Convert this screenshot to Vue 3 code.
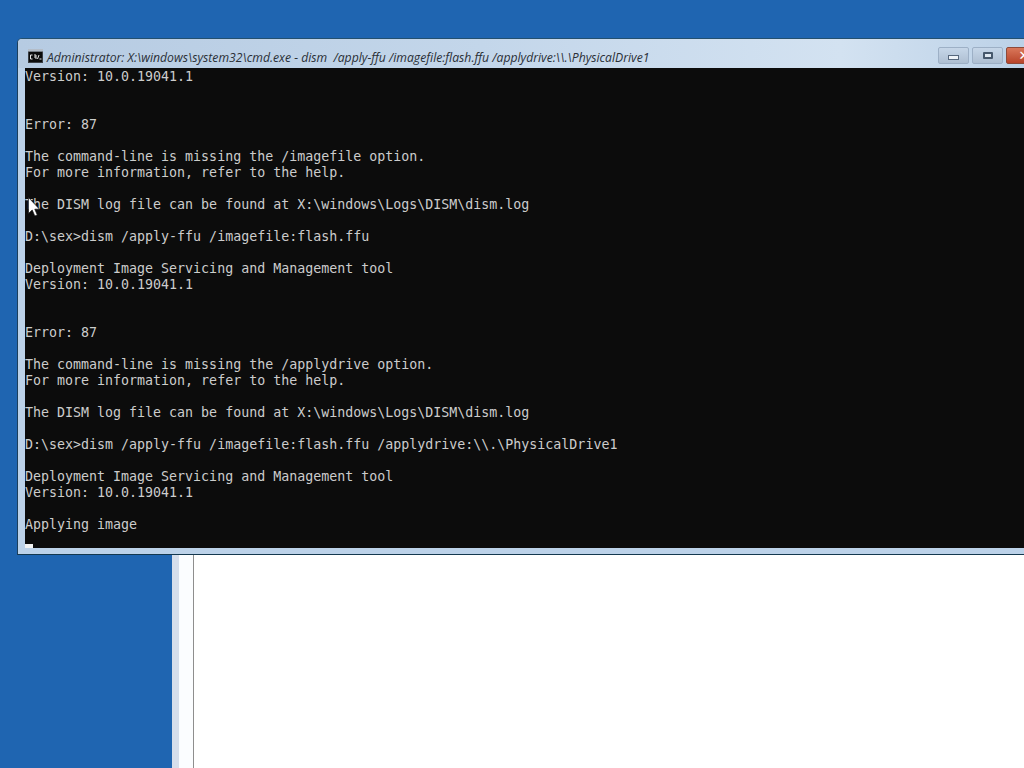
<script setup>
const title = 'Administrator: X:\\windows\\system32\\cmd.exe - dism  /apply-ffu /imagefile:flash.ffu /applydrive:\\\\.\\PhysicalDrive1'
const lines = [
  'Version: 10.0.19041.1', '', '', 'Error: 87', '',
  'The command-line is missing the /imagefile option.',
  'For more information, refer to the help.', '',
  'The DISM log file can be found at X:\\windows\\Logs\\DISM\\dism.log', '',
  'D:\\sex>dism /apply-ffu /imagefile:flash.ffu', '',
  'Deployment Image Servicing and Management tool',
  'Version: 10.0.19041.1', '', '', 'Error: 87', '',
  'The command-line is missing the /applydrive option.',
  'For more information, refer to the help.', '',
  'The DISM log file can be found at X:\\windows\\Logs\\DISM\\dism.log', '',
  'D:\\sex>dism /apply-ffu /imagefile:flash.ffu /applydrive:\\\\.\\PhysicalDrive1', '',
  'Deployment Image Servicing and Management tool',
  'Version: 10.0.19041.1', '', 'Applying image'
]
</script>

<template>
  <div class="desktop">
    <div class="setup">
      <div class="setup-edge"></div>
      <div class="setup-side"></div>
      <div class="setup-main"></div>
    </div>

    <div class="window">
      <div class="titlebar">
        <svg class="cmd-icon" width="15" height="14" viewBox="0 0 15 14">
          <rect width="15" height="14" fill="#3a3f45" />
          <rect x="0" y="0" width="15" height="2.5" fill="#b4bdc8" />
          <rect x="1" y="3" width="13" height="10" fill="#0c0c0c" />
          <path d="M4.5 6H2.5v4h2M6 6h2v4M6 8h2M9.5 10l1.5-4M11.5 10h2" fill="none" stroke="#e8e8e8" stroke-width="1" />
        </svg>
        <span class="title">{{ title }}</span>
        <div class="controls">
          <div class="ctl"><span class="min-glyph"></span></div>
          <div class="ctl"><span class="max-glyph"></span></div>
          <div class="ctl close"><span class="close-glyph">✕</span></div>
        </div>
      </div>
      <div class="console">
        <div v-for="(l, i) in lines" :key="i" class="line">{{ l }}</div>
        <div class="cursor-line"><span class="caret"></span></div>
      </div>
    </div>

    <svg class="pointer" width="12" height="20" viewBox="0 0 12 20">
      <path d="M0.5 0.5V16.5L4.2 13L6.8 19L9.3 18L6.8 12.2H11.5Z" fill="#fff" stroke="#111" stroke-width="0.7" />
    </svg>
  </div>
</template>

<style>
html, body { margin: 0; padding: 0; overflow: hidden; }
</style>

<style scoped>
.desktop {
  position: relative;
  width: 1024px;
  height: 768px;
  overflow: hidden;
  background: #1f65b1;
}
.setup {
  position: absolute;
  left: 172px;
  top: 500px;
  right: 0;
  bottom: 0;
  display: flex;
  background: #fff;
}
.setup-edge { width: 7px; background: #d6deeb; }
.setup-side { width: 14px; background: #fbfdff; border-right: 1px solid #8e8e8e; }
.setup-main { flex: 1; background: #fff; }
.window {
  position: absolute;
  left: 17px;
  top: 38px;
  width: 1031px;
  height: 517px;
  box-sizing: border-box;
  padding: 0 7px 6px 7px;
  display: flex;
  flex-direction: column;
  background: #bcd2e9;
  border: 1px solid #1c3f5c;
  border-top-color: #24506f;
  border-bottom: 1px solid #14384f;
  border-radius: 5px 5px 0 0;
}
.titlebar {
  height: 29px;
  margin: 0 -7px;
  padding: 0 7px 0 10px;
  flex: none;
  display: flex;
  align-items: center;
  background: linear-gradient(90deg, #b6cbe2 0%, #c3d6ea 45%, #d3e2f1 80%, #b9cfe6 100%);
  border-radius: 4px 4px 0 0;
}
.cmd-icon { flex: none; margin-top: 5px; }
.title {
  margin-left: 4px;
  margin-top: 8px;
  font-family: "Open Sans", "Noto Sans", sans-serif;
  font-style: italic;
  font-size: 12.2px;
  color: #2a2f36;
  white-space: pre;
  flex: none;
}
.controls {
  position: absolute;
  left: 920px;
  top: 8px;
  display: flex;
  gap: 3px;
}
.ctl {
  width: 31px;
  height: 17px;
  box-sizing: border-box;
  border: 1px solid #9db0c6;
  border-radius: 2px;
  background: linear-gradient(#c6d6e8, #aebfd2);
  display: flex;
  align-items: center;
  justify-content: center;
}
.min-glyph { width: 9px; height: 3px; margin-top: 3px; background: #eef3f8; border: 1px solid #56677c; }
.max-glyph { width: 6px; height: 3px; border: 2px solid #46586c; border-radius: 1px; background: #dfe8f1; }
.close {
  width: 36px;
  background: linear-gradient(#d9775a, #b8442a);
  border-color: #8e4a3a;
}
.close-glyph { color: #fff; font: bold 13px "DejaVu Sans", sans-serif; }
.console {
  position: relative;
  box-sizing: border-box;
  width: 1000px;
  height: 480px;
  flex: none;
  padding-top: 1px;
  background: #0c0c0c;
  overflow: hidden;
  font-family: "DejaVu Sans Mono", monospace;
  font-size: 13.3px;
  line-height: 16px;
  color: #cccccc;
  white-space: pre;
}
.line { height: 16px; }
.cursor-line { position: absolute; left: 0; bottom: 0; height: 16px; width: 8px; }
.caret { position: absolute; left: 0; top: 12px; width: 8px; height: 4px; background: #f2f2f2; }
.pointer { position: absolute; left: 28px; top: 197px; }
</style>
